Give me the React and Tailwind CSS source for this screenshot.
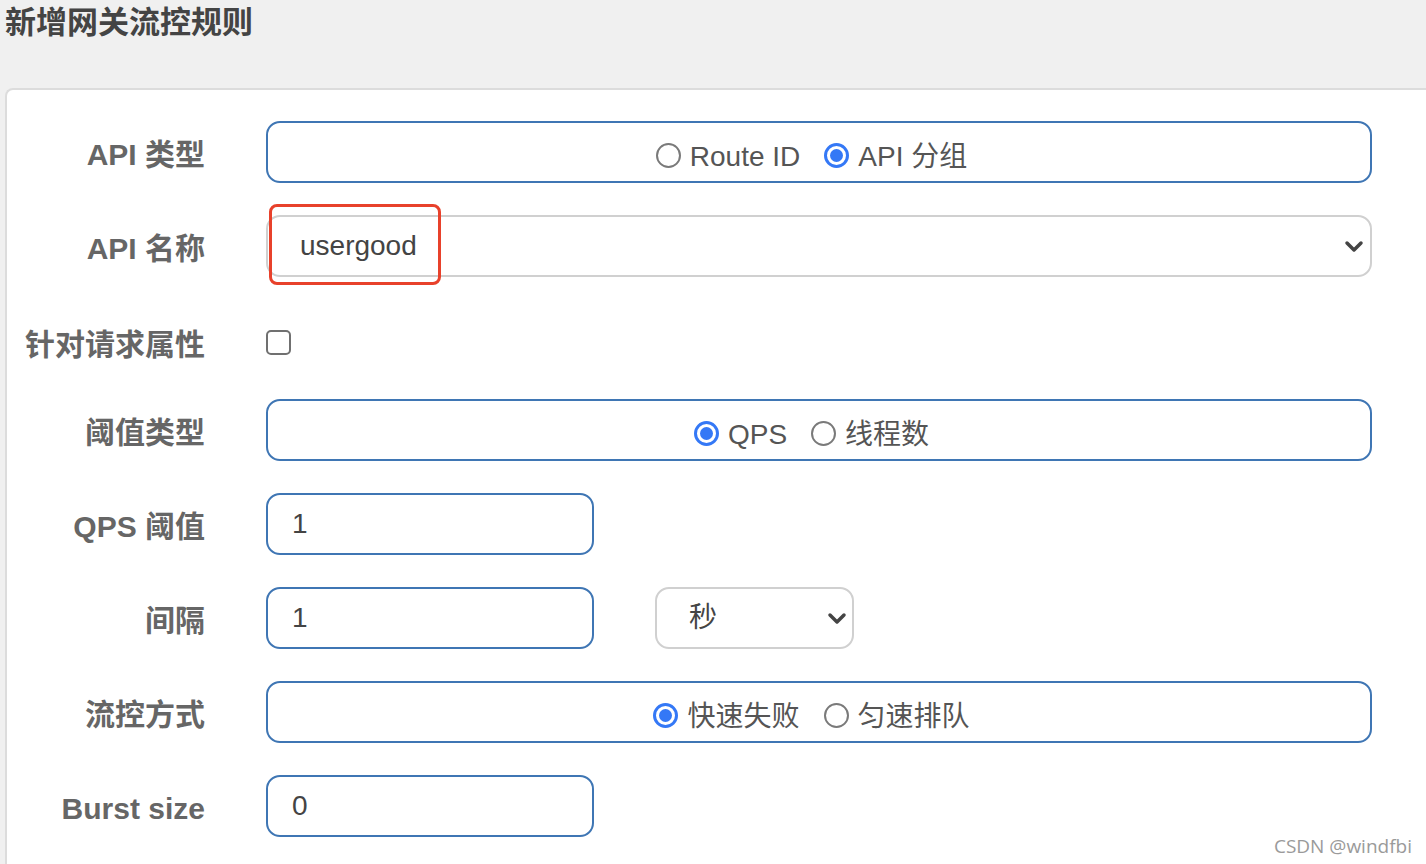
import React from 'react';

const font = { fontFamily: '"Liberation Sans", "Noto Sans CJK SC", sans-serif' };

function Radio({ checked, label }) {
  return (
    <label className="flex items-center gap-[9px]">
      {checked ? (
        <span className="w-[25px] h-[25px] rounded-full border-[3px] border-[#3478f6] bg-white flex items-center justify-center">
          <span className="w-[13px] h-[13px] rounded-full bg-[#3478f6]" />
        </span>
      ) : (
        <span className="w-[25px] h-[25px] rounded-full border-2 border-[#7a7a7a] bg-white" />
      )}
      <span className="text-[28px] leading-none text-[#555] pt-[4px]">{label}</span>
    </label>
  );
}

function Chevron() {
  return (
    <svg width="20" height="14" viewBox="0 0 20 14" className="shrink-0">
      <polyline points="3,4 10,11 17,4" fill="none" stroke="#444" strokeWidth="3.5" strokeLinecap="round" strokeLinejoin="round" />
    </svg>
  );
}

function Row({ label, children, className = 'h-[62px]' }) {
  return (
    <div className={`flex items-center shrink-0 ${className}`}>
      <div className="w-[198px] text-right text-[30px] font-bold text-[#666] leading-none whitespace-nowrap pt-[6px]">{label}</div>
      <div className="ml-[61px] flex-1 flex items-center h-full gap-[61px]">{children}</div>
    </div>
  );
}

function RadioBox({ children }) {
  return (
    <div className="w-[1106px] h-full rounded-[14px] border-2 border-[#3f76b4] bg-white flex items-center justify-center gap-[24px] pr-[15px] pt-[6px]">
      {children}
    </div>
  );
}

function TextInput({ value }) {
  return (
    <div className="w-[328px] h-full rounded-[14px] border-2 border-[#3f76b4] bg-white flex items-center pl-[24px] text-[28px] text-[#444]">
      {value}
    </div>
  );
}

export default function App() {
  return (
    <div className="h-screen bg-[#f0f0f0] relative overflow-hidden" style={font}>
      <h1 className="pl-[5px] pt-[7px] h-[88px] text-[31px] font-bold text-[#444] leading-[32px]">新增网关流控规则</h1>
      <div className="ml-[5px] bg-white border-2 border-r-0 border-[#dcdcdc] rounded-tl-[8px] min-h-[800px] pt-[31px] flex flex-col gap-[32px]">
        <Row label="API 类型">
          <RadioBox>
            <Radio label="Route ID" />
            <Radio checked label="API 分组" />
          </RadioBox>
        </Row>
        <Row label="API 名称">
          <div className="relative w-[1106px] h-full rounded-[14px] border-2 border-[#d0d0d0] bg-white flex items-center justify-between pl-[32px] pr-[6px] text-[28px] text-[#444]">
            <span>usergood</span>
            <Chevron />
            <div className="absolute left-[1px] top-[-13px] w-[172px] h-[81px] rounded-[8px] border-[3px] border-[#e8412b]" />
          </div>
        </Row>
        <Row label="针对请求属性" className="h-[58px] pt-[8px]">
          <span className="w-[25px] h-[25px] rounded-[5px] border-2 border-[#707070] bg-white" />
        </Row>
        <Row label="阈值类型">
          <RadioBox>
            <Radio checked label="QPS" />
            <Radio label="线程数" />
          </RadioBox>
        </Row>
        <Row label="QPS 阈值">
          <TextInput value="1" />
        </Row>
        <Row label="间隔">
          <TextInput value="1" />
          <div className="w-[199px] h-full rounded-[14px] border-2 border-[#d0d0d0] bg-white flex items-center justify-between pl-[32px] pr-[5px] text-[28px] text-[#444]">
            <span>秒</span>
            <Chevron />
          </div>
        </Row>
        <Row label="流控方式">
          <RadioBox>
            <Radio checked label="快速失败" />
            <Radio label="匀速排队" />
          </RadioBox>
        </Row>
        <Row label="Burst size">
          <TextInput value="0" />
        </Row>
      </div>
      <div className="absolute right-[14px] bottom-[4px] text-[19px] text-[#9a9a9a]" style={{ fontFamily: '"Open Sans", "Noto Sans", sans-serif' }}>CSDN @windfbi</div>
    </div>
  );
}
